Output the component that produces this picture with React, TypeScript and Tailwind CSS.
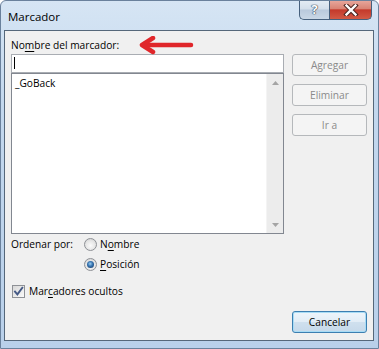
import React from "react";

const U = ({ children }: { children: React.ReactNode }) => (
  <span className="underline decoration-1 underline-offset-[2px]">{children}</span>
);

function DisabledButton({ label }: { label: string }) {
  return (
    <div className="flex h-[22px] w-[75px] items-center justify-center rounded-[3px] border border-[#b5b8bb] bg-[#f4f4f4] text-[#8a8a8a]">
      {label}
    </div>
  );
}

function Radio({ checked }: { checked?: boolean }) {
  return (
    <div className="flex h-[13px] w-[13px] shrink-0 items-center justify-center rounded-full border border-[#8e9196] bg-[radial-gradient(circle_at_50%_60%,#fbfbfb_0%,#e6e6e6_55%,#c9c9c9_100%)]">
      {checked && (
        <div className="h-[7px] w-[7px] rounded-full bg-[radial-gradient(circle_at_45%_40%,#9fd0f2_0%,#3a78b4_40%,#0f2b55_100%)]" />
      )}
    </div>
  );
}

function Checkbox() {
  return (
    <div className="relative h-[13px] w-[13px] shrink-0 border border-[#8e9196] bg-gradient-to-br from-[#d8d8d8] to-[#fafafa]">
      <svg viewBox="0 0 11 11" className="absolute left-0 top-0 h-[11px] w-[11px]">
        <path d="M2 5.6 L4.4 8.4 L9.3 1.8" stroke="#455a86" strokeWidth="1.9" fill="none" strokeLinecap="square" />
      </svg>
    </div>
  );
}

export default function App() {
  return (
    <div className="relative h-[349px] w-[379px] overflow-hidden rounded-t-[6px] border border-[#6a819c] bg-[linear-gradient(180deg,#d6e5f4_0%,#c3d8ee_30%,#b9d0ea_100%)] font-['Open_Sans',sans-serif] text-[10.2px] leading-[16px] text-black">
      {/* title bar */}
      <div className="flex h-[29px] items-start justify-between">
        <div className="pl-[7px] pt-[8px] text-[11.5px] leading-[16px] text-black">Marcador</div>
        <div className="-mt-px mr-[6px] flex">
          <div className="flex h-[20px] w-[30px] items-center justify-center rounded-bl-[5px] border border-t-0 border-r-0 border-[#46607d] bg-[linear-gradient(180deg,#e6edf5_0%,#d4dfeb_48%,#b9c9dc_52%,#c9d7e6_100%)]">
            <span className="text-[13px] font-bold leading-[13px] text-white [text-shadow:0_0_1px_#2b3a4c,0_0_1px_#2b3a4c,0_0_1px_#2b3a4c]">?</span>
          </div>
          <div className="flex h-[20px] w-[43px] items-center justify-center rounded-br-[5px] border border-t-0 border-[#46607d] bg-[linear-gradient(180deg,#e9aa9f_0%,#d98374_46%,#c4392b_52%,#d25a45_100%)]">
            <svg viewBox="0 0 16 12" className="h-[12px] w-[16px]">
              <path d="M3.5 1.5 L12.5 10.5 M12.5 1.5 L3.5 10.5" stroke="#4b2520" strokeWidth="4.4" strokeLinecap="square" />
              <path d="M3.5 1.5 L12.5 10.5 M12.5 1.5 L3.5 10.5" stroke="#ffffff" strokeWidth="2.4" strokeLinecap="square" />
            </svg>
          </div>
        </div>
      </div>

      {/* client area */}
      <div className="ml-[3px] flex h-[311px] w-[370px] flex-col border border-[#55677a] bg-[#f0f0f0] px-[6px]">
        <div className="pt-[6px]">
          <span>
            No<U>m</U>bre del marcador:
          </span>
        </div>
        <div className="flex gap-[8px]">
          <div className="flex w-[273px] flex-col pt-[1px]">
            <div className="relative h-[19px] border border-[#a9adb3] bg-white">
              <div className="absolute left-[2px] top-[2px] h-[12px] w-px bg-black" />
            </div>
            <div className="flex h-[161px] border border-[#828790] bg-white">
              <div className="flex-1 pl-[3px] pt-[1px]">_GoBack</div>
              <div className="flex w-[17px] flex-col justify-between border-l border-[#f4f4f4] bg-[#ececec]">
                <div className="flex h-[17px] items-center justify-center">
                  <svg viewBox="0 0 7 4" className="h-[4px] w-[7px]">
                    <path d="M0 4 L3.5 0 L7 4 Z" fill="#a4a4a4" />
                  </svg>
                </div>
                <div className="flex h-[17px] items-center justify-center">
                  <svg viewBox="0 0 7 4" className="h-[4px] w-[7px]">
                    <path d="M0 0 L3.5 4 L7 0 Z" fill="#a4a4a4" />
                  </svg>
                </div>
              </div>
            </div>
          </div>
          <div className="flex flex-col gap-[8px] pt-[1px]">
            <DisabledButton label="Agregar" />
            <DisabledButton label="Eliminar" />
            <DisabledButton label="Ir a" />
          </div>
        </div>

        {/* order by */}
        <div className="mt-[2px] flex">
          <div className="w-[73px]">Ordenar por:</div>
          <div className="flex flex-col gap-[4px]">
            <div className="flex items-center gap-[3px]">
              <Radio />
              <span>
                N<U>o</U>mbre
              </span>
            </div>
            <div className="flex items-center gap-[3px]">
              <Radio checked />
              <span>
                <U>P</U>osición
              </span>
            </div>
          </div>
        </div>

        <div className="mt-[11px] flex items-center gap-[4px] pl-[1px]">
          <Checkbox />
          <span>
            Mar<U>c</U>adores ocultos
          </span>
        </div>

        <div className="mt-[12px] flex justify-end">
          <div className="flex h-[22px] w-[75px] items-center justify-center rounded-[3px] border border-[#3c7fb1] bg-[linear-gradient(180deg,#eef5fb_0%,#e2edf6_48%,#cfe0ee_52%,#c6d9ea_100%)] shadow-[inset_0_0_0_1px_#a8dcf5]">
            Cancelar
          </div>
        </div>
      </div>

      {/* annotation arrow */}
      <svg className="absolute left-[136px] top-[35px] h-[20px] w-[60px]" viewBox="0 0 60 20">
        <path d="M54 9 L6 9" stroke="#e0262a" strokeWidth="4.5" strokeLinecap="round" />
        <path d="M16 2 L5 9 L16 16" stroke="#e0262a" strokeWidth="4.5" strokeLinecap="round" strokeLinejoin="round" fill="none" />
      </svg>
    </div>
  );
}
